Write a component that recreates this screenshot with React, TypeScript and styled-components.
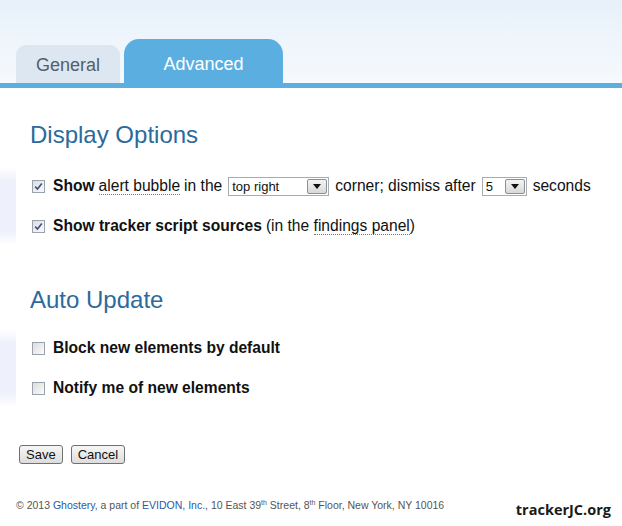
import React from "react";
import styled, { createGlobalStyle } from "styled-components";

const GlobalStyle = createGlobalStyle`
  html, body {
    margin: 0;
    padding: 0;
    background: #ffffff;
  }
  body {
    font-family: "Liberation Sans", Arial, sans-serif;
    color: #111;
  }
`;

const Page = styled.div`
  width: 622px;
  height: 526px;
  overflow: hidden;
  background: #fff;
`;

const Header = styled.div`
  height: 83px;
  background: linear-gradient(#e7f1fa, #f6f9fd);
  border-bottom: 5px solid #5aafe0;
  display: flex;
  align-items: flex-end;
  padding-left: 16px;
  gap: 4px;
`;

const Tab = styled.div<{ $active?: boolean }>`
  display: flex;
  align-items: center;
  justify-content: center;
  font-size: 18px;
  box-sizing: border-box;
  width: ${(p) => (p.$active ? "159px" : "104px")};
  height: ${(p) => (p.$active ? "44px" : "38px")};
  padding-top: ${(p) => (p.$active ? "6px" : "2px")};
  border-radius: ${(p) => (p.$active ? "15px 15px 0 0" : "10px 10px 0 0")};
  background: ${(p) => (p.$active ? "#5aafe0" : "#dce7f2")};
  color: ${(p) => (p.$active ? "#ffffff" : "#565d66")};
`;

const Heading = styled.h2`
  margin: 0;
  padding-left: 30px;
  font-weight: normal;
  font-size: 24px;
  line-height: 28px;
  color: #2b6a9c;
`;

const Options = styled.div<{ $top: number }>`
  margin-top: ${(p) => p.$top}px;
  display: flex;
`;

const Shade = styled.div`
  width: 16px;
  flex: none;
  background: linear-gradient(#ffffff, #eef1fb 18%, #eef1fb 82%, #ffffff);
`;

const List = styled.div`
  padding: 8px 0 8px 14px;
  display: flex;
  flex-direction: column;
  gap: 18px;
`;

const Row = styled.label`
  display: flex;
  align-items: center;
  height: 22px;
  font-size: 15.6px;
  white-space: nowrap;
`;

const Check = styled.span<{ $checked?: boolean }>`
  width: 11px;
  height: 11px;
  margin: 0 8px 0 2px;
  border: 1px solid #9aa3ad;
  background: linear-gradient(135deg, #dcdcdc, #fbfbfb);
  display: inline-flex;
  align-items: center;
  justify-content: center;
  flex: none;
  svg {
    display: ${(p) => (p.$checked ? "block" : "none")};
  }
`;

const Bold = styled.b`
  font-weight: bold;
  margin-right: 4px;
`;

const Dotted = styled.span`
  border-bottom: 1px dotted #777;
  line-height: 16px;
  margin-right: 4px;
`;

const Select = styled.span<{ $w: number }>`
  display: inline-flex;
  align-items: center;
  justify-content: space-between;
  box-sizing: border-box;
  width: ${(p) => p.$w}px;
  height: 19px;
  margin: 0 6px;
  border: 1px solid #a5acb5;
  background: #fff;
  font-size: 13px;
  padding: 1px 1px 1px 3px;
`;

const Arrow = styled.span`
  width: 20px;
  height: 15px;
  box-sizing: border-box;
  border: 1px solid #8e8f8f;
  border-radius: 2px;
  background: linear-gradient(#f4f4f4, #d8d8d8);
  display: flex;
  align-items: center;
  justify-content: center;
  &::after {
    content: "";
    border-left: 4px solid transparent;
    border-right: 4px solid transparent;
    border-top: 5px solid #111;
  }
`;

const Section = styled.div<{ $top: number }>`
  margin-top: ${(p) => p.$top}px;
`;

const Buttons = styled.div`
  display: flex;
  gap: 8px;
  padding-left: 19px;
  margin-top: 38px;
`;

const Button = styled.button`
  font-family: "Liberation Sans", Arial, sans-serif;
  font-size: 13px;
  height: 19px;
  padding: 0 6px;
  border: 1px solid #707070;
  border-radius: 3px;
  background: linear-gradient(#f6f6f6, #dddddd);
  color: #111;
  line-height: 15px;
`;

const Footer = styled.div`
  display: flex;
  align-items: flex-start;
  justify-content: space-between;
  padding: 0 11px 0 16px;
  margin-top: 35px;
`;

const Copy = styled.span`
  font-size: 10.5px;
  color: #555;
  sup {
    font-size: 7px;
    vertical-align: 4px;
    line-height: 0;
  }
`;

const Link = styled.a`
  color: #2a58a8;
  text-decoration: none;
`;

const Mark = styled.span`
  font-family: "Open Sans", sans-serif;
  font-weight: bold;
  font-size: 14.5px;
  color: #1a1a1a;
  margin-top: 1px;
`;

function Tick() {
  return (
    <svg width="9" height="9" viewBox="0 0 9 9">
      <path d="M1.2 4.6 L3.5 7 L7.8 1.5" fill="none" stroke="#3d4f86" strokeWidth="1.6" />
    </svg>
  );
}

export default function App() {
  return (
    <Page>
      <GlobalStyle />
      <Header>
        <Tab>General</Tab>
        <Tab $active>Advanced</Tab>
      </Header>
      <Section $top={33}>
        <Heading>Display Options</Heading>
        <Options $top={18}>
          <Shade />
          <List>
            <Row>
              <Check $checked><Tick /></Check>
              <Bold>Show</Bold>
              <Dotted>alert bubble</Dotted>
              in the
              <Select $w={101}>
                top right
                <Arrow />
              </Select>
              corner; dismiss after
              <Select $w={45}>
                5
                <Arrow />
              </Select>
              seconds
            </Row>
            <Row>
              <Check $checked><Tick /></Check>
              <Bold>Show tracker script sources</Bold>
              (in the&nbsp;<Dotted style={{ marginRight: 0 }}>findings panel</Dotted>)
            </Row>
          </List>
        </Options>
      </Section>
      <Section $top={41}>
        <Heading>Auto Update</Heading>
        <Options $top={15}>
          <Shade />
          <List>
            <Row>
              <Check />
              <Bold>Block new elements by default</Bold>
            </Row>
            <Row>
              <Check />
              <Bold>Notify me of new elements</Bold>
            </Row>
          </List>
        </Options>
      </Section>
      <Buttons>
        <Button>Save</Button>
        <Button>Cancel</Button>
      </Buttons>
      <Footer>
        <Copy>
          © 2013 <Link>Ghostery</Link>, a part of <Link>EVIDON, Inc.</Link>, 10 East 39<sup>th</sup> Street, 8
          <sup>th</sup> Floor, New York, NY 10016
        </Copy>
        <Mark>trackerJC.org</Mark>
      </Footer>
    </Page>
  );
}
